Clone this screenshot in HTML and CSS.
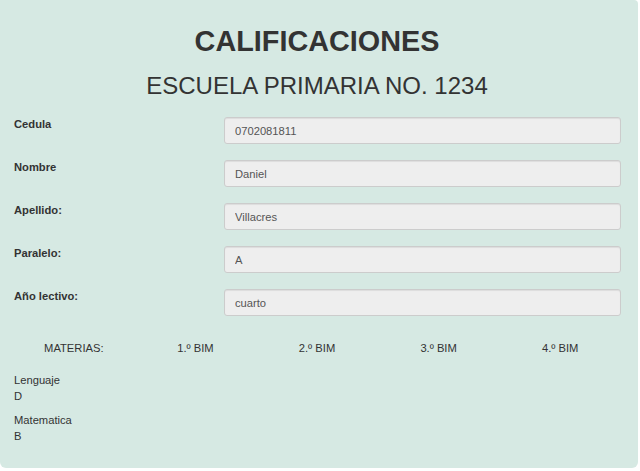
FILE: index.html
```html
<!DOCTYPE html>
<html lang="es">
<head>
<meta charset="utf-8">
<title>Calificaciones</title>
<link rel="stylesheet" href="styles.css">
</head>
<body>
<div class="panel">
  <h1 class="title">CALIFICACIONES</h1>
  <h2 class="subtitle">ESCUELA PRIMARIA NO. 1234</h2>
  <form class="form">
    <div class="row"><label class="label">Cedula</label><input class="field" type="text" value="0702081811"></div>
    <div class="row"><label class="label">Nombre</label><input class="field" type="text" value="Daniel"></div>
    <div class="row"><label class="label">Apellido:</label><input class="field" type="text" value="Villacres"></div>
    <div class="row"><label class="label">Paralelo:</label><input class="field" type="text" value="A"></div>
    <div class="row"><label class="label">Año lectivo:</label><input class="field" type="text" value="cuarto"></div>
  </form>
  <div class="grades-head">
    <span>MATERIAS:</span>
    <span>1.º BIM</span>
    <span>2.º BIM</span>
    <span>3.º BIM</span>
    <span>4.º BIM</span>
  </div>
  <div class="subjects">
    <div class="subject"><div>Lenguaje</div><div>D</div></div>
    <div class="subject"><div>Matematica</div><div>B</div></div>
  </div>
</div>
</body>
</html>
```
FILE: styles.css
```css
html, body {
  margin: 0;
  padding: 0;
  background: #ffffff;
}
body {
  font-family: "Liberation Sans", Arial, sans-serif;
  font-size: 11.2px;
  line-height: 16px;
  color: #333333;
}
.panel {
  width: 638px;
  height: 468px;
  box-sizing: border-box;
  background: #d6e9e3;
  border-radius: 0 4px 6px 6px;
  padding: 25px 17px 0 13px;
}
.title {
  margin: 0;
  font-size: 28.8px;
  line-height: 32px;
  font-weight: bold;
  text-align: center;
}
.subtitle {
  margin: 16px 0 0;
  font-size: 24px;
  line-height: 26px;
  font-weight: normal;
  text-align: center;
}
.form {
  margin: 18px 0 0;
  display: flex;
  flex-direction: column;
  gap: 16px;
}
.row {
  display: grid;
  grid-template-columns: 211px 1fr;
  align-items: start;
}
.label {
  font-weight: bold;
  padding-left: 1px;
  margin-top: -1px;
}
.field {
  box-sizing: border-box;
  height: 27px;
  width: 100%;
  margin: 0;
  padding: 0 10px;
  font-family: "Liberation Sans", Arial, sans-serif;
  font-size: 11.2px;
  color: #555555;
  background: #eeeeee;
  border: 1px solid #cccccc;
  border-radius: 3px;
  box-shadow: inset 0 1px 1px rgba(0,0,0,0.075);
}
.grades-head {
  margin-top: 24px;
  display: grid;
  grid-template-columns: repeat(5, 1fr);
  text-align: center;
}
.subjects {
  margin-top: 16px;
  display: flex;
  flex-direction: column;
  gap: 8px;
  padding-left: 1px;
}
```
